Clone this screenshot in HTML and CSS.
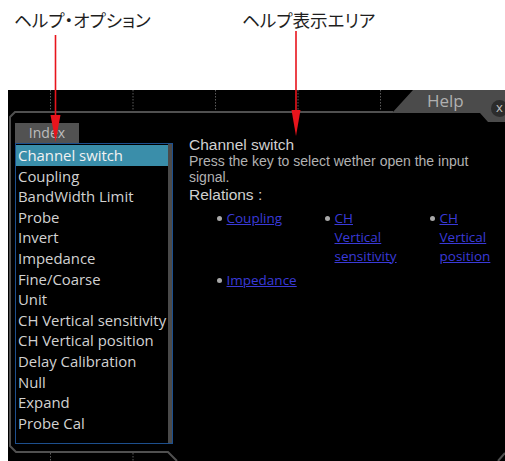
FILE: index.html
```html
<!DOCTYPE html>
<html lang="ja">

<head>
    <meta charset="UTF-8">
    <meta name="viewport" content="width=device-width, initial-scale=1.0">
    <title>Help</title>
    <link rel="stylesheet" href="styles.css">
</head>
<body>
<div class="labels">
    <span class="label label-options">ヘルプ・オプション</span>
    <span class="label label-area">ヘルプ表示エリア</span>
</div>

<div class="screen">
    <!-- grid and frame drawing -->
    <svg class="frame" width="497" height="371" viewBox="0 0 497 371">
        <defs>
            <pattern id="dots" x="42" y="0" width="82.5" height="3" patternUnits="userSpaceOnUse">
                <rect x="0" y="0" width="1" height="1.5" fill="#5a5a5a"></rect>
            </pattern>
        </defs>
        <rect x="0" y="0" width="497" height="371" fill="url(#dots)"></rect>
        <polygon points="2,27 7,22 497,22 497,371 169,371 160,362 8,362 2,356" fill="#000"></polygon>
        <polyline points="385,22 7,22 2,27 2,356 8,362 160,362 169,371" fill="none" stroke="#505050" stroke-width="2"></polyline>
        <polyline points="490,371 497,363" fill="none" stroke="#505050" stroke-width="2"></polyline>
        <polygon points="384,23 405,0 497,0 497,32 480,32 472,23" fill="#4b4b4b"></polygon>
    </svg>

    <div class="tab-label">
        <span class="tab-title">Help</span>
        <span class="close">x</span>
    </div>

    <div class="panel">
        <div class="sidebar">
            <div class="index-tab">Index</div>
            <ul class="topics">
                <li class="current">Channel switch</li>
                <li>Coupling</li>
                <li>BandWidth Limit</li>
                <li>Probe</li>
                <li>Invert</li>
                <li>Impedance</li>
                <li>Fine/Coarse</li>
                <li>Unit</li>
                <li>CH Vertical sensitivity</li>
                <li>CH Vertical position</li>
                <li>Delay Calibration</li>
                <li>Null</li>
                <li>Expand</li>
                <li>Probe Cal</li>
            </ul>
        </div>

        <div class="help-body">
            <h2>Channel switch</h2>
            <p>Press the key to select wether open the input signal.</p>
            <h3>Relations :</h3>
            <ul class="relations">
                <li><i></i><a href="#">Coupling</a></li>
                <li><i></i><a href="#">CH Vertical sensitivity</a></li>
                <li><i></i><a href="#">CH Vertical position</a></li>
                <li><i></i><a href="#">Impedance</a></li>
            </ul>
        </div>
    </div>
</div>

<!-- callout arrows -->
<svg class="arrows" width="505" height="461" viewBox="0 0 505 461">
    <line x1="55.5" y1="35" x2="55.5" y2="120" stroke="#e8141c" stroke-width="1.6"></line>
    <polygon points="50.5,115 60.5,115 55.5,142" fill="#e8141c"></polygon>
    <line x1="296" y1="31" x2="296" y2="114" stroke="#e8141c" stroke-width="1.6"></line>
    <polygon points="291.5,110 300.5,110 296,136" fill="#e8141c"></polygon>
</svg>
</body>
</html>
```

FILE: styles.css
```css
* {
    margin: 0;
    padding: 0;
    list-style: none;
    border: 0;
    box-sizing: border-box;
}

body {
    width: 505px;
    height: 461px;
    overflow: hidden;
    position: relative;
    background-color: #ffffff;
}

.labels {
    height: 90px;
    display: flex;
    padding: 7px 0 0 14px;
}

.label {
    font-family: "Noto Sans CJK JP", sans-serif;
    font-feature-settings: "palt";
    font-size: 17.6px;
    line-height: 26px;
    color: #1e1e1e;
}

.label-options {
    width: 228px;
}

.screen {
    margin-left: 8px;
    height: 371px;
    padding: 21px 0 0 1px;
    background-color: #000000;
    position: relative;
}

.frame {
    position: absolute;
    left: 0;
    top: 0;
}

.tab-label {
    position: absolute;
    left: 384px;
    top: 0;
    width: 113px;
    height: 32px;
    font-family: "Open Sans", sans-serif;
}

.tab-title {
    position: absolute;
    left: 35px;
    top: -1px;
    font-size: 17px;
    line-height: 24px;
    color: #b0b0b0;
}

.close {
    position: absolute;
    left: 99px;
    top: 10px;
    width: 17px;
    height: 17px;
    border-radius: 50%;
    background-color: #2c2c2c;
    color: #c0c0c0;
    font-size: 13px;
    line-height: 15px;
    text-align: center;
}

.panel {
    position: relative;
    height: 342px;
    padding: 12px 0 0 6px;
    display: flex;
    gap: 16px;
}

.sidebar {
    width: 158px;
    flex-shrink: 0;
    font-family: "Open Sans", sans-serif;
}

.index-tab {
    width: 64px;
    height: 20px;
    line-height: 20px;
    text-align: center;
    font-size: 14px;
    color: #bdbdbd;
    background-color: #525252;
}

.topics {
    height: 301px;
    border: 1px solid #1d4f8d;
    padding: 1px 4px 0 0;
    box-shadow: inset -4px 0 0 #4a4a4a;
}

.topics li {
    height: 20.6px;
    line-height: 20.6px;
    padding-left: 2px;
    font-size: 14.9px;
    color: #d2d2d2;
    white-space: nowrap;
}

.topics li.current {
    background-color: #3a8eaa;
    color: #f2f2f2;
}

.help-body {
    flex: 1;
    min-width: 0;
    margin-top: 12.5px;
    padding-right: 10px;
    font-family: "Liberation Sans", Arial, sans-serif;
}

.help-body h2,
.help-body h3 {
    font-size: 15.5px;
    line-height: 17px;
    font-weight: normal;
    color: #d0d0d0;
}

.help-body h3 {
    margin-top: 1px;
}

.help-body p {
    font-size: 14px;
    line-height: 16px;
    color: #b2b2b2;
}

.relations {
    display: grid;
    grid-template-columns: 108px 105px 1fr;
    row-gap: 5px;
    margin: 6px 0 0 27px;
    font-family: "Open Sans", sans-serif;
    font-size: 13.5px;
    line-height: 19px;
}

.relations li {
    display: flex;
    align-items: flex-start;
}

.relations i {
    flex-shrink: 0;
    width: 5px;
    height: 5px;
    margin: 7px 4.5px 0 1px;
    border-radius: 50%;
    background-color: #a8a8a8;
}

.relations a {
    width: 66px;
    color: #3a3ad8;
    text-decoration: underline;
}

.arrows {
    position: absolute;
    left: 0;
    top: 0;
    pointer-events: none;
}
```
